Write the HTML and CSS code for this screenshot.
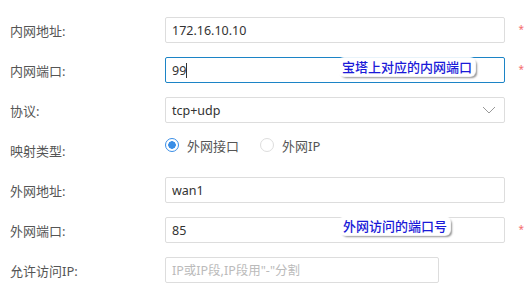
FILE: index.html
```html
<!DOCTYPE html>
<html lang="zh-CN">
<head>
    <meta charset="UTF-8">
    <meta name="viewport" content="width=device-width, initial-scale=1.0">
    <title>端口映射</title>
    <link rel="stylesheet" href="styles.css">
</head>
<body>
    <form class="form">
        <div class="row">
            <label class="label">内网地址:</label>
            <div class="field"><input class="input" type="text" value="172.16.10.10"></div>
            <span class="required">*</span>
        </div>

        <div class="row">
            <label class="label">内网端口:</label>
            <div class="field">
                <div class="input focused">99<span class="caret"></span></div>
                <span class="note note-inner">宝塔上对应的内网端口</span>
            </div>
            <span class="required">*</span>
        </div>

        <div class="row">
            <label class="label">协议:</label>
            <div class="field">
                <div class="input select">
                    tcp+udp
                    <svg class="arrow" width="14" height="8" viewBox="0 0 14 8"><path d="M1 1l6 6 6-6" fill="none" stroke="#999" stroke-width="1"/></svg>
                </div>
            </div>
            <span class="required"></span>
        </div>

        <div class="row">
            <label class="label">映射类型:</label>
            <div class="field radios">
                <span class="radio"><span class="dot checked"></span>外网接口</span>
                <span class="radio"><span class="dot"></span>外网IP</span>
            </div>
            <span class="required"></span>
        </div>

        <div class="row">
            <label class="label">外网地址:</label>
            <div class="field"><input class="input" type="text" value="wan1"></div>
            <span class="required"></span>
        </div>

        <div class="row">
            <label class="label">外网端口:</label>
            <div class="field">
                <input class="input" type="text" value="85">
                <span class="note note-outer">外网访问的端口号</span>
            </div>
            <span class="required">*</span>
        </div>

        <div class="row">
            <label class="label">允许访问IP:</label>
            <div class="field"><input class="input short" type="text" placeholder="IP或IP段,IP段用&quot;-&quot;分割"></div>
            <span class="required"></span>
        </div>
    </form>
</body>
</html>
```

FILE: styles.css
```css
body {
    margin: 0;
    font-family: "Noto Sans", "Noto Sans CJK SC", sans-serif;
    font-size: 13px;
    color: #333;
    background: #fff;
}
.form {
    padding: 10px 0 0 10px;
}
.row {
    display: grid;
    grid-template-columns: 155px 340px 19px;
    align-items: center;
    height: 40px;
}
.label {
    color: #555;
}
.field {
    position: relative;
    display: flex;
    align-items: center;
}
.input {
    box-sizing: border-box;
    width: 340px;
    height: 26px;
    padding: 0 6px;
    border: 1px solid #ddd;
    border-radius: 2px;
    font: inherit;
    font-size: 12.5px;
    color: #333;
    outline: none;
    display: flex;
    align-items: center;
}
.input::placeholder {
    color: #bbb;
}
.input.short {
    width: 274px;
}
.focused {
    border-color: #1c84c6;
}
.caret {
    display: inline-block;
    width: 1px;
    height: 15px;
    background: #333;
}
.select {
    justify-content: space-between;
    padding-right: 8px;
}
.required {
    color: #f56c6c;
    font-size: 10px;
    text-align: right;
    margin-top: -3px;
}
.radios {
    gap: 21px;
    margin-top: -10px;
}
.radio {
    display: flex;
    align-items: center;
    gap: 8px;
    color: #555;
}
.dot {
    box-sizing: border-box;
    width: 14px;
    height: 14px;
    border: 1px solid #ddd;
    border-radius: 50%;
}
.dot.checked {
    border-color: #3a8ee6;
    background: radial-gradient(circle, #3a8ee6 0 3.5px, #fff 4px);
}
.note {
    position: absolute;
    top: 1px;
    padding: 0 3px;
    background: #fff;
    color: #1a1ad8;
    font-family: "Noto Sans CJK SC", sans-serif;
    font-size: 13px;
    font-weight: 500;
    line-height: 18px;
    border-radius: 5px;
    box-shadow: 0 0 1px 1px #fff, 2px 2px 2px rgba(0, 0, 0, 0.45);
}
.note-inner {
    left: 174px;
}
.note-outer {
    left: 175px;
    top: 0;
}
```
